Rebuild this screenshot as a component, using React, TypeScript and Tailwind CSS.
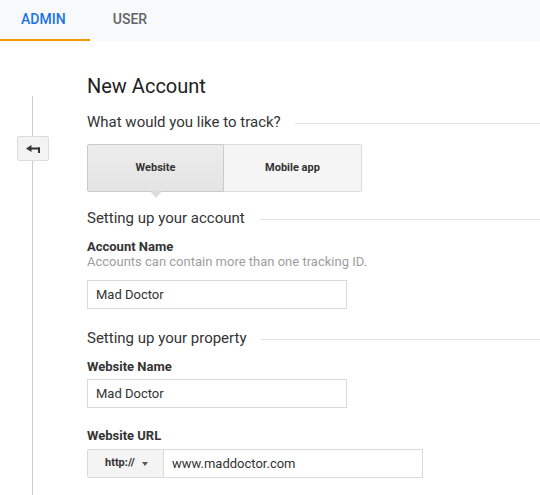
import React from "react";

function Heading({ children }: { children: React.ReactNode }) {
  return (
    <div className="flex items-center gap-[14px]">
      <span className="whitespace-nowrap text-[15px] leading-[20px] text-[#333333]">{children}</span>
      <div className="mt-[2px] h-px flex-1 bg-[#e3e3e3]" />
    </div>
  );
}

function BackIcon() {
  return (
    <svg width="14" height="8" viewBox="0 0 14 8" fill="#333333">
      <path d="M0 3.5 L5.5 0 L5.5 7 Z" />
      <rect x="5" y="2.5" width="9" height="2" />
      <rect x="12" y="2.5" width="2" height="5.5" />
    </svg>
  );
}

export default function App() {
  return (
    <div
      className="relative h-[495px] w-[540px] overflow-hidden bg-white"
      style={{ fontFamily: "Roboto, 'Liberation Sans', Arial, sans-serif" }}
    >
      <div className="flex h-[41px] bg-[#f8f9fa]">
        <div className="flex w-[90px] items-center border-b-2 border-[#f29900] pl-[21px] text-[14px] font-medium text-[#1a73e8]">
          ADMIN
        </div>
        <div className="flex w-[80px] items-center justify-center pb-[2px] text-[14px] font-medium text-[#5f6368]">
          USER
        </div>
      </div>

      <div className="flex h-[454px]">
        <div className="flex w-[65px] flex-col items-center pt-[55px]">
          <div className="h-[40px] w-px bg-[#cccccc]" />
          <div className="flex h-[25px] w-[32px] items-center justify-center rounded-[2px] border border-[#dcdcdc] bg-[#f3f3f3]">
            <BackIcon />
          </div>
          <div className="w-px flex-1 bg-[#cccccc]" />
        </div>

        <div className="flex flex-1 flex-col pl-[22px] pt-[33px]">
          <div className="text-[20px] leading-[24px] text-[#212121]">New Account</div>

          <div className="mt-[14px]">
            <Heading>What would you like to track?</Heading>
          </div>

          <div className="mt-[12px] flex h-[48px] w-[275px]">
            <div className="relative flex w-[137px] items-center justify-center rounded-l-[2px] border border-[#cbcbcb] bg-gradient-to-b from-[#ececec] to-[#e4e4e4] text-[11px] font-bold text-[#333333]">
              Website
              <div className="absolute left-1/2 top-full h-0 w-0 -translate-x-1/2 border-x-[6px] border-t-[7px] border-x-transparent border-t-[#dcdcdc]" />
            </div>
            <div className="flex flex-1 items-center justify-center rounded-r-[2px] border border-l-0 border-[#dcdcdc] bg-[#f5f5f5] text-[11px] font-bold text-[#333333]">
              Mobile app
            </div>
          </div>

          <div className="mt-[16px]">
            <Heading>Setting up your account</Heading>
          </div>

          <div className="mt-[11px] text-[13px] font-bold leading-[15px] text-[#333333]">Account Name</div>
          <div className="text-[13px] leading-[16px] text-[#9e9e9e]">Accounts can contain more than one tracking ID.</div>

          <div className="mt-[10px] flex h-[29px] w-[260px] items-center border border-[#dadada] px-[8px] text-[13px] text-[#333333]">
            Mad Doctor
          </div>

          <div className="mt-[19px]">
            <Heading>Setting up your property</Heading>
          </div>

          <div className="mt-[11px] text-[13px] font-bold leading-[15px] text-[#333333]">Website Name</div>

          <div className="mt-[5px] flex h-[29px] w-[260px] items-center border border-[#dadada] px-[8px] text-[13px] text-[#333333]">
            Mad Doctor
          </div>

          <div className="mt-[20px] text-[13px] font-bold leading-[15px] text-[#333333]">Website URL</div>

          <div className="mt-[6px] flex h-[29px] w-[336px]">
            <div className="flex w-[77px] items-center gap-[7px] rounded-l-[2px] border border-[#dadada] bg-[#f4f4f4] pl-[17px] text-[11px] font-bold text-[#333333]">
              http://
              <span className="h-0 w-0 border-x-[3.5px] border-t-[4px] border-x-transparent border-t-[#555555]" />
            </div>
            <div className="flex flex-1 items-center border border-l-0 border-[#dadada] px-[8px] text-[13px] text-[#333333]">
              www.maddoctor.com
            </div>
          </div>
        </div>
      </div>
    </div>
  );
}
